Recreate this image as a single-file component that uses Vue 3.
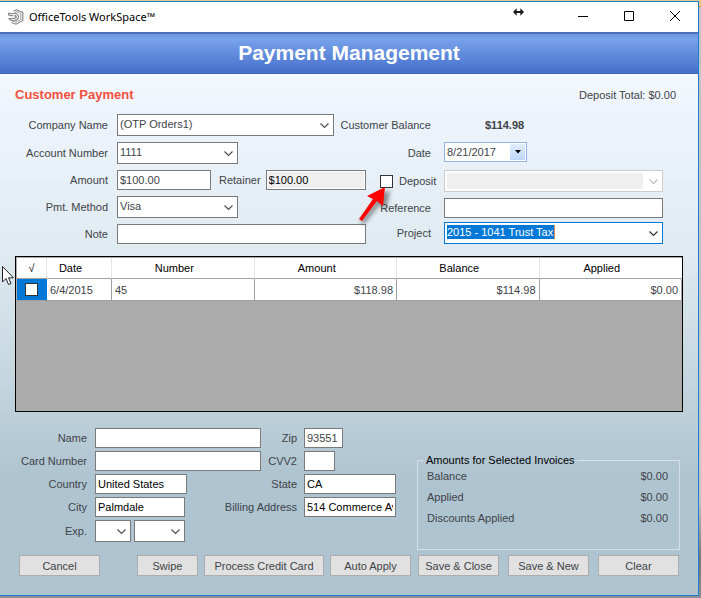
<template>
  <div class="desktop">
    <div class="window">
      <header class="title-bar">
        <svg class="app-logo" viewBox="0 0 16 16" fill="none" stroke="#8a8a8a" stroke-width="1.2">
          <path d="M5.500 2 L8.500 0.800 L14.800 3.500 V11.500 L8 15.200 L3.500 13.500" />
          <path d="M6 3.500 L9 2.600 L12.800 4.500 V10.500 L8 13.200 L4.500 12" stroke="#b0b0b0" />
          <path d="M0.800 9.500 Q2 12 6 11.500 Q10.800 11 10.500 7.500 Q10 4.300 6.500 4.500 Q3 5 0.500 4.200 V6 Q3 7 5 6.500" />
          <path d="M0.800 9.500 Q3 10 5 9.500 Q8.500 9.500 8.200 7.800 Q7.800 6.300 6 7" stroke="#777777" />
        </svg>
        <span class="app-name">OfficeTools WorkSpace™</span>
        <svg class="resize-cursor" viewBox="0 0 12 8">
          <path d="M0 4 L4 0 V3 H8 V0 L12 4 L8 8 V5 H4 V8 Z" fill="#1c1c1c" />
        </svg>
        <div class="window-controls">
          <button type="button" aria-label="Minimize">
            <svg viewBox="0 0 12 12"><path d="M1 5.500 H11" /></svg>
          </button>
          <button type="button" aria-label="Maximize">
            <svg viewBox="0 0 12 12"><path d="M1.500 0.500 H10.500 V9.500 H1.500 Z" /></svg>
          </button>
          <button type="button" aria-label="Close">
            <svg viewBox="0 0 12 12"><path d="M1 0 L11 10 M11 0 L1 10" /></svg>
          </button>
        </div>
      </header>

      <h1 class="banner">Payment Management</h1>

      <form class="content" @submit.prevent>
        <div class="heading">
          <h2>Customer Payment</h2>
          <span>Deposit Total: $0.00</span>
        </div>

        <div class="payment">
          <div class="column">
            <div class="row">
              <label for="company">Company Name</label>
              <select id="company" v-model="company" class="company">
                <option>(OTP Orders1)</option>
              </select>
            </div>
            <div class="row">
              <label for="account">Account Number</label>
              <select id="account" v-model="account" class="medium">
                <option>1111</option>
              </select>
            </div>
            <div class="row">
              <label for="amount">Amount</label>
              <input type="text" id="amount" v-model="amount" class="amount" />
              <label for="retainer" class="retainer-label">Retainer</label>
              <input type="text" id="retainer" :value="retainer" class="wide readonly" readonly />
            </div>
            <div class="row">
              <label for="method">Pmt. Method</label>
              <select id="method" v-model="method" class="medium">
                <option>Visa</option>
              </select>
            </div>
            <div class="row">
              <label for="note">Note</label>
              <input type="text" id="note" v-model="note" class="wide" />
            </div>
          </div>

          <div class="column right">
            <div class="row tall">
              <span class="label">Customer Balance</span>
              <strong class="balance">$114.98</strong>
            </div>
            <div class="row tall">
              <label for="date">Date</label>
              <div class="date-picker">
                <input type="text" id="date" v-model="date" />
                <button type="button" aria-label="Choose date">
                  <svg viewBox="0 0 6 4"><path d="M0 0 H6 L3 3.500 Z" /></svg>
                </button>
              </div>
            </div>
            <div class="row">
              <div class="deposit">
                <input type="checkbox" id="deposit" v-model="deposit" />
                <label for="deposit">Deposit</label>
                <svg class="arrow" viewBox="0 0 40 44">
                  <path class="arrow-shadow" d="M5 39 L21 19 L27 24 L31 5 L13 14 L17 17 L1 37 Z" />
                  <path d="M3 36 L18 16 L24 21 L26 2 L8 11 L14 14 L0 34 Z" fill="#ff0000" />
                </svg>
              </div>
              <select class="wide" aria-label="Deposit account" :disabled="!deposit">
                <option></option>
              </select>
            </div>
            <div class="row-pair">
              <div class="row">
                <label for="reference">Reference</label>
                <input type="text" id="reference" v-model="reference" class="wide" />
              </div>
              <div class="row">
                <label for="project">Project</label>
                <select id="project" v-model="project" class="wide selected">
                  <option>2015 - 1041 Trust Tax</option>
                </select>
              </div>
            </div>
          </div>
        </div>

        <div class="invoices">
          <table>
            <colgroup>
              <col class="check-col" />
              <col class="date-col" />
              <col span="4" />
            </colgroup>
            <thead>
              <tr>
                <th>√</th>
                <th v-for="name in columns" :key="name" class="named">{{ name }}</th>
              </tr>
            </thead>
            <tbody>
              <tr v-for="invoice in invoices" :key="invoice.number">
                <td class="check-cell">
                  <input type="checkbox" v-model="invoice.checked" :aria-label="'Select invoice ' + invoice.number" />
                </td>
                <td>{{ invoice.date }}</td>
                <td>{{ invoice.number }}</td>
                <td class="money">{{ invoice.amount }}</td>
                <td class="money">{{ invoice.balance }}</td>
                <td class="money">{{ invoice.applied }}</td>
              </tr>
            </tbody>
          </table>
        </div>

        <div class="billing">
          <div class="column card-column">
            <div class="row">
              <label for="name">Name</label>
              <input type="text" id="name" v-model="card.name" class="wide" />
            </div>
            <div class="row">
              <label for="card-number">Card Number</label>
              <input type="text" id="card-number" v-model="card.number" class="wide" />
            </div>
            <div class="row">
              <label for="country">Country</label>
              <input type="text" id="country" v-model="card.country" class="place" />
            </div>
            <div class="row">
              <label for="city">City</label>
              <input type="text" id="city" v-model="card.city" class="city" />
            </div>
            <div class="row">
              <label for="exp-month">Exp.</label>
              <select id="exp-month" class="month"><option></option></select>
              <select class="year" aria-label="Expiration year"><option></option></select>
            </div>
          </div>

          <div class="column address-column">
            <div class="row">
              <label for="zip">Zip</label>
              <input type="text" id="zip" v-model="card.zip" class="zip" />
            </div>
            <div class="row">
              <label for="cvv">CVV2</label>
              <input type="text" id="cvv" v-model="card.cvv" class="cvv" />
            </div>
            <div class="row">
              <label for="state">State</label>
              <input type="text" id="state" v-model="card.state" class="place" />
            </div>
            <div class="row">
              <label for="address">Billing Address</label>
              <input type="text" id="address" v-model="card.address" class="place" />
            </div>
          </div>

          <fieldset class="totals">
            <legend>Amounts for Selected Invoices</legend>
            <div v-for="total in totals" :key="total.label" class="total">
              <span>{{ total.label }}</span>
              <span>{{ total.value }}</span>
            </div>
          </fieldset>
        </div>

        <div class="actions">
          <button type="button" class="cancel">Cancel</button>
          <div class="process-group">
            <button type="button" class="swipe">Swipe</button>
            <button type="button" class="process">Process Credit Card</button>
            <button type="button">Auto Apply</button>
          </div>
          <div class="save-group">
            <button type="submit">Save &amp; Close</button>
            <button type="button">Save &amp; New</button>
            <button type="button">Clear</button>
          </div>
        </div>
      </form>

      <svg class="grip" viewBox="0 0 12 12" fill="#c0bcb8">
        <path d="M8 0h2v2h-2z M8 4h2v2h-2z M4 4h2v2h-2z M8 8h2v2h-2z M4 8h2v2h-2z M0 8h2v2h-2z" />
      </svg>
      <svg class="pointer" viewBox="0 0 12 20">
        <path d="M0.500 0.500 V16 L4 12.500 L6.500 18.500 L9 17.500 L6.500 11.800 H11.500 Z" fill="#ffffff" stroke="#222222" />
      </svg>
    </div>
  </div>
</template>

<script setup>
import { ref, reactive } from 'vue';

const company = ref('(OTP Orders1)');
const account = ref('1111');
const amount = ref('$100.00');
const retainer = ref('$100.00');
const method = ref('Visa');
const note = ref('');
const date = ref('8/21/2017');
const deposit = ref(false);
const reference = ref('');
const project = ref('2015 - 1041 Trust Tax');

const columns = ['Date', 'Number', 'Amount', 'Balance', 'Applied'];

const invoices = reactive([
  { checked: false, date: '6/4/2015', number: '45', amount: '$118.98', balance: '$114.98', applied: '$0.00' },
]);

const card = reactive({
  name: '',
  number: '',
  country: 'United States',
  city: 'Palmdale',
  zip: '93551',
  cvv: '',
  state: 'CA',
  address: '514 Commerce Ave',
});

const totals = [
  { label: 'Balance', value: '$0.00' },
  { label: 'Applied', value: '$0.00' },
  { label: 'Discounts Applied', value: '$0.00' },
];
</script>

<style>
body {
  background: #a9a9ab;
}
</style>

<style scoped>
* {
  box-sizing: border-box;
}

.desktop {
  display: flex;
  min-height: 100vh;
  padding: 1px 2px 2px 0;
  background: linear-gradient(#e0c888 0 6px, #d8913c 6px 7px, #c4c4c6 7px 500px, #77777a 560px, #8f8f91);
  font-family: "Liberation Sans", Arial, sans-serif;
  font-size: 11px;
  line-height: 14px;
  color: #404347;
}

.window {
  position: relative;
  display: flex;
  flex: 1;
  flex-direction: column;
  min-width: 0;
  border: 1px solid #1c80cf;
  border-left: 0;
}

.title-bar {
  position: relative;
  display: flex;
  align-items: center;
  height: 30px;
  padding-left: 8px;
  background: #ffffff;
}

.app-logo {
  width: 16px;
  height: 16px;
  margin-right: 5px;
}

.app-name {
  font-family: "Noto Sans", "Segoe UI", sans-serif;
  font-size: 11px;
  color: #000000;
}

.resize-cursor {
  position: absolute;
  top: 6px;
  right: 174px;
  width: 11px;
  height: 8px;
}

.window-controls {
  display: flex;
  margin-left: auto;
}

.window-controls button {
  display: flex;
  align-items: center;
  justify-content: center;
  width: 46px;
  height: 30px;
  padding: 0;
  border: 0;
  background: none;
}

.window-controls svg {
  width: 12px;
  height: 12px;
  overflow: visible;
  fill: none;
  stroke: #000000;
}

.banner {
  height: 42px;
  margin: 0;
  border-top: 2px solid #4b6fb8;
  border-bottom: 1px solid #4068b8;
  background: linear-gradient(#6d95e0, #78a2eb 5px, #4570cb);
  color: #ffffff;
  font-size: 21px;
  line-height: 38px;
  text-align: center;
}

.content {
  display: flex;
  flex: 1;
  flex-direction: column;
  padding: 0 15px 19px;
  background: linear-gradient(#f4f9fd, #eef4fd 7%, #dfeaf0 35%, #bdd0da 65%, #afc4d1 77%, #afc4d1);
}

.heading {
  display: flex;
  align-items: center;
  justify-content: space-between;
  padding: 13px 7px 11px 0;
}

.heading h2 {
  margin: 0;
  color: #f0503c;
  font-size: 13px;
  line-height: 16px;
}

.payment {
  display: grid;
  grid-template-columns: minmax(0, 351fr) minmax(0, 297fr);
  padding-right: 20px;
}

.column {
  display: flex;
  flex-direction: column;
  gap: 6px;
}

.row {
  display: flex;
  align-items: center;
}

.row > label,
.label {
  display: flex;
  flex: none;
  justify-content: flex-end;
  width: 93px;
  margin-right: 9px;
  white-space: nowrap;
}

.row > .retainer-label {
  width: auto;
  margin: 0 5px 0 8px;
}

.right .row > label,
.right .label {
  width: 65px;
  margin-right: 13px;
}

.tall {
  height: 22px;
}

.row-pair {
  display: flex;
  flex-direction: column;
  gap: 4px;
}

input,
select,
button {
  font: inherit;
  color: inherit;
}

input[type="text"] {
  height: 20px;
  min-width: 0;
  margin: 0;
  padding: 0 2px;
  border: 1px solid #7a7a7a;
  border-radius: 0;
  background: #ffffff;
}

select {
  height: 22px;
  min-width: 0;
  margin: 0;
  padding: 0 20px 2px 2px;
  border: 1px solid #7a7a7a;
  border-radius: 0;
  appearance: none;
  background: #ffffff url("data:image/svg+xml,%3Csvg xmlns='http://www.w3.org/2000/svg' width='9' height='6'%3E%3Cpath d='M.5 .5L4.500 4.500L8.500 .5' fill='none' stroke='%23505050' stroke-width='1.200'/%3E%3C/svg%3E") no-repeat right 4px top 8px;
}

select:disabled {
  border-color: #cccccc;
  opacity: 1;
  background:
    linear-gradient(#efefef, #efefef) no-repeat 2px 2px / calc(100% - 21px) 16px,
    #ffffff url("data:image/svg+xml,%3Csvg xmlns='http://www.w3.org/2000/svg' width='9' height='6'%3E%3Cpath d='M.5 .5L4.500 4.500L8.500 .5' fill='none' stroke='%23bfbfbf' stroke-width='1.200'/%3E%3C/svg%3E") no-repeat right 4px top 8px;
}

input[type="checkbox"] {
  width: 13px;
  height: 13px;
  margin: 0;
  border: 1px solid #333333;
  appearance: none;
  background: #ffffff;
}

input[type="checkbox"]:checked {
  background: #0078d7;
}

.company {
  flex: 1;
  margin-right: 32px;
}

.medium {
  width: 121px;
}

.amount {
  width: 94px;
}

.wide {
  flex: 1;
}

input.readonly {
  background: #efefef;
  box-shadow: inset 0 0 0 1px #ffffff;
  color: #000000;
}

.balance {
  margin-left: 41px;
}

.date-picker {
  display: flex;
  align-self: flex-start;
  width: 83px;
  height: 20px;
  padding: 1px;
  border: 1px solid #93b3e8;
  background: #ffffff;
}

.date-picker input[type="text"] {
  flex: 1;
  height: 16px;
  padding: 0 1px;
  border: 0;
}

.date-picker button {
  display: flex;
  align-items: center;
  justify-content: center;
  width: 15px;
  padding: 0;
  border: 0;
  background: linear-gradient(#e2eeff, #bcd6fb);
}

.date-picker svg {
  width: 6px;
  height: 4px;
}

.deposit {
  position: relative;
  display: flex;
  flex: none;
  align-items: center;
  gap: 6px;
  width: 78px;
  padding-left: 14px;
}

.arrow {
  position: absolute;
  top: 11px;
  left: -7px;
  z-index: 1;
  width: 40px;
  height: 44px;
  overflow: visible;
}

.arrow-shadow {
  fill: rgba(60, 60, 60, 0.6);
  filter: blur(2px);
}

.selected {
  border-color: #0078d7;
  color: #ffffff;
  background:
    linear-gradient(90deg, #0078d7 107px, #e08a4a 107px) no-repeat 2px 2px / 108px 14px,
    #ffffff url("data:image/svg+xml,%3Csvg xmlns='http://www.w3.org/2000/svg' width='9' height='6'%3E%3Cpath d='M.5 .5L4.500 4.500L8.500 .5' fill='none' stroke='%23303030' stroke-width='1.200'/%3E%3C/svg%3E") no-repeat right 4px top 8px;
}

.selected option {
  color: #404347;
}

.invoices {
  flex: 1;
  min-height: 80px;
  margin-top: 12px;
  padding: 1px 0 0 1px;
  border: 1px solid #000000;
  background: #ababab;
}

table {
  width: 100%;
  border-collapse: separate;
  border-spacing: 0;
  table-layout: fixed;
}

.check-col {
  width: 30px;
}

.date-col {
  width: 65px;
}

th {
  height: 21px;
  padding: 0;
  border-right: 1px solid #e5e5e5;
  border-bottom: 1px solid #a0a0a0;
  background: #ffffff;
  color: #000000;
  font-weight: normal;
}

th:last-child {
  border-right-color: #ffffff;
}

.named {
  padding-right: 17px;
}

td {
  height: 22px;
  padding: 0 3px;
  border-right: 1px solid #a0a0a0;
  border-bottom: 1px solid #a0a0a0;
  background: #ffffff;
}

.check-cell {
  padding: 0;
  border-right-color: #0078d7;
  background: #0078d7;
}

.check-cell input[type="checkbox"] {
  display: block;
  margin: 0 auto;
}

.money {
  text-align: right;
}

.billing {
  display: grid;
  grid-template-columns: minmax(0, 1fr) 135px 284px;
  align-items: start;
  margin-top: 16px;
  padding-right: 3px;
}

.billing .column {
  gap: 3px;
}

.card-column .row > label {
  width: 72px;
  margin-right: 8px;
}

.address-column .row > label {
  width: 36px;
  margin-right: 7px;
}

.place,
.city {
  width: 92px;
}

.city {
  width: 90px;
}

input.place,
input.city {
  color: #000000;
}

.month {
  width: 36px;
  margin-right: 3px;
}

.year {
  width: 51px;
}

.zip {
  width: 39px;
}

.cvv {
  width: 31px;
}

.totals {
  min-width: 0;
  height: 97px;
  margin: 25px 0 0 21px;
  padding: 2px 11px 0 9px;
  border: 1px solid #d5dfe6;
}

.totals legend {
  margin-left: -3px;
  padding: 0 2px;
  color: #000000;
}

.total {
  display: flex;
  justify-content: space-between;
  margin-bottom: 7px;
}

.actions {
  display: flex;
  gap: 7px;
  margin-top: 5px;
  padding: 0 4px;
}

.actions button {
  width: 81px;
  height: 21px;
  padding: 0;
  border: 1px solid #adadad;
  border-radius: 0;
  background: #e1e1e1;
  white-space: nowrap;
}

.actions .cancel {
  margin-right: auto;
}

.actions .swipe {
  width: 61px;
}

.actions .process {
  width: 120px;
}

.process-group {
  display: flex;
  gap: 6px;
}

.save-group {
  display: flex;
  gap: 9px;
}

.grip {
  position: absolute;
  right: 0;
  bottom: 0;
  width: 12px;
  height: 12px;
}

.pointer {
  position: absolute;
  top: 264px;
  left: 2px;
  width: 12px;
  height: 20px;
}
</style>
